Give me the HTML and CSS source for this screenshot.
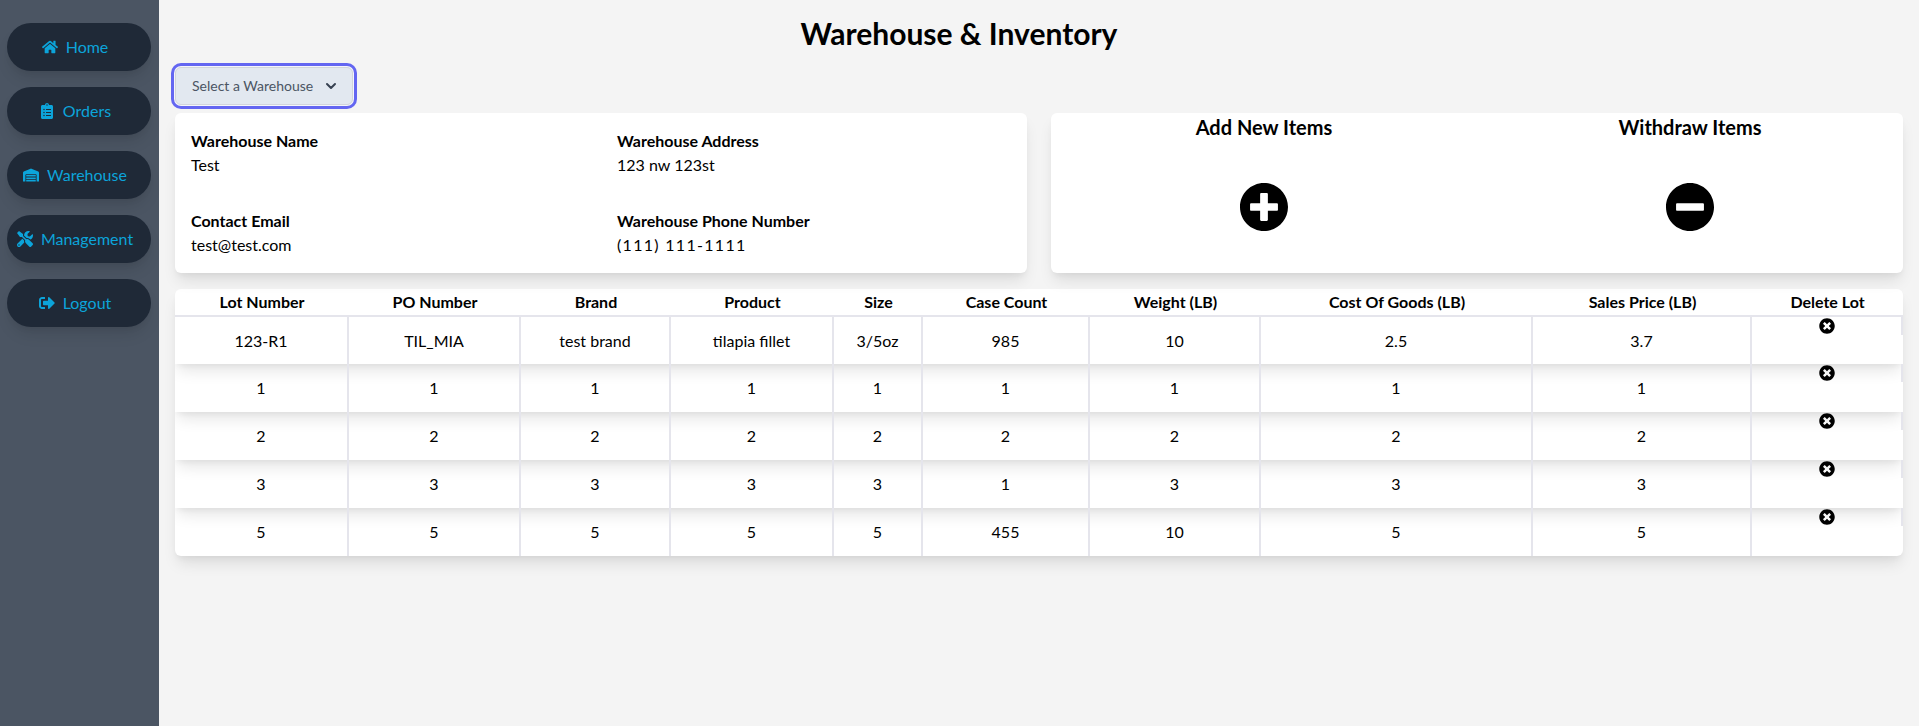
FILE: index.html
```html
<!DOCTYPE html>
<html lang="en">
<head>
<meta charset="utf-8">
<title>Warehouse &amp; Inventory</title>
<link rel="stylesheet" href="styles.css">
</head>
<body>
<div class="app">
  <nav class="sidebar">
    <a class="nav-btn"><svg class="nav-icon" viewBox="0 0 576 512"><path d="M280.37 148.26L96 300.11V464a16 16 0 0 0 16 16l112.06-.29a16 16 0 0 0 15.92-16V368a16 16 0 0 1 16-16h64a16 16 0 0 1 16 16v95.64a16 16 0 0 0 16 16.05L464 480a16 16 0 0 0 16-16V300L295.67 148.26a12.19 12.19 0 0 0-15.3 0zM571.6 251.47L488 182.56V44.05a12 12 0 0 0-12-12h-56a12 12 0 0 0-12 12v72.61L318.47 43a48 48 0 0 0-61 0L4.34 251.47a12 12 0 0 0-1.6 16.9l25.5 31A12 12 0 0 0 45.15 301l235.22-193.74a12.19 12.19 0 0 1 15.3 0L530.9 301a12 12 0 0 0 16.9-1.6l25.5-31a12 12 0 0 0-1.7-16.93z"/></svg><span>Home</span></a>
    <a class="nav-btn"><svg class="nav-icon nav-icon-narrow" viewBox="0 0 384 512"><path d="M336 64h-80c0-35.3-28.7-64-64-64s-64 28.7-64 64H48C21.5 64 0 85.5 0 112v352c0 26.5 21.5 48 48 48h288c26.5 0 48-21.5 48-48V112c0-26.5-21.5-48-48-48zM96 424c-13.3 0-24-10.7-24-24s10.7-24 24-24 24 10.7 24 24-10.7 24-24 24zm0-96c-13.3 0-24-10.7-24-24s10.7-24 24-24 24 10.7 24 24-10.7 24-24 24zm0-96c-13.3 0-24-10.7-24-24s10.7-24 24-24 24 10.7 24 24-10.7 24-24 24zm96-192c13.3 0 24 10.7 24 24s-10.7 24-24 24-24-10.7-24-24 10.7-24 24-24zm128 368c0 4.4-3.6 8-8 8H168c-4.4 0-8-3.6-8-8v-16c0-4.4 3.6-8 8-8h144c4.4 0 8 3.6 8 8v16zm0-96c0 4.4-3.6 8-8 8H168c-4.4 0-8-3.6-8-8v-16c0-4.4 3.6-8 8-8h144c4.4 0 8 3.6 8 8v16zm0-96c0 4.4-3.6 8-8 8H168c-4.4 0-8-3.6-8-8v-16c0-4.4 3.6-8 8-8h144c4.4 0 8 3.6 8 8v16z"/></svg><span>Orders</span></a>
    <a class="nav-btn"><svg class="nav-icon" viewBox="0 0 640 512"><path d="M504 352H136.4c-4.4 0-8 3.6-8 8l-.1 48c0 4.4 3.6 8 8 8H504c4.4 0 8-3.6 8-8v-48c0-4.4-3.6-8-8-8zm0 96H136.1c-4.4 0-8 3.6-8 8l-.1 48c0 4.4 3.6 8 8 8h368c4.4 0 8-3.6 8-8v-48c0-4.4-3.6-8-8-8zm0-192H136.6c-4.4 0-8 3.6-8 8l-.1 48c0 4.4 3.6 8 8 8H504c4.4 0 8-3.6 8-8v-48c0-4.4-3.6-8-8-8zm106.5-139L338.4 3.7a48.15 48.15 0 0 0-36.9 0L29.5 117C11.7 124.5 0 141.9 0 161.3V504c0 4.4 3.6 8 8 8h80c4.4 0 8-3.6 8-8V256c0-17.6 14.6-32 32.6-32h382.8c18 0 32.6 14.4 32.6 32v248c0 4.4 3.6 8 8 8h80c4.4 0 8-3.6 8-8V161.3c0-19.4-11.7-36.8-29.5-44.3z"/></svg><span>Warehouse</span></a>
    <a class="nav-btn"><svg class="nav-icon" viewBox="0 0 512 512"><path d="M501.1 395.7L384 278.6c-23.1-23.1-57.6-27.6-85.4-13.9L192 158.1V96L64 0 0 64l96 128h62.1l106.6 106.6c-13.6 27.8-9.2 62.3 13.9 85.4l117.1 117.1c14.6 14.6 38.2 14.6 52.7 0l52.7-52.7c14.5-14.6 14.5-38.2 0-52.7zM331.7 225c28.3 0 54.9 11 74.9 31l19.4 19.4c15.8-6.9 30.8-16.5 43.8-29.5 37.1-37.1 49.7-89.3 37.9-136.7-2.2-9-13.5-12.1-20.1-5.5l-74.4 74.4-67.9-11.3L334 98.9l74.4-74.4c6.6-6.6 3.4-17.9-5.7-20.2-47.4-11.7-99.6.9-136.6 37.9-28.5 28.5-41.9 66.1-41.2 103.6l82.1 82.1c8.1-1.9 16.5-2.9 24.7-2.9zm-103.9 82l-56.7-56.7L18.7 402.8c-25 25-25 65.5 0 90.5s65.5 25 90.5 0l123.6-123.6c-7.6-19.9-9.9-41.6-5-62.7zM64 472c-13.2 0-24-10.8-24-24 0-13.3 10.7-24 24-24s24 10.7 24 24c0 13.2-10.7 24-24 24z"/></svg><span>Management</span></a>
    <a class="nav-btn"><svg class="nav-icon" viewBox="0 0 512 512"><path d="M497 273L329 441c-15 15-41 4.5-41-17v-96H152c-13.3 0-24-10.7-24-24v-96c0-13.3 10.7-24 24-24h136V88c0-21.4 25.9-32 41-17l168 168c9.3 9.4 9.3 24.6 0 34zM192 436v-40c0-6.6-5.4-12-12-12H96c-17.7 0-32-14.3-32-32V160c0-17.7 14.3-32 32-32h84c6.6 0 12-5.4 12-12V76c0-6.6-5.4-12-12-12H96c-53 0-96 43-96 96v192c0 53 43 96 96 96h84c6.6 0 12-5.4 12-12z"/></svg><span>Logout</span></a>
  </nav>
  <main class="main">
    <h1 class="title">Warehouse &amp; Inventory</h1>
    <button class="select">Select a Warehouse<svg class="chevron" viewBox="0 0 24 24"><path d="M6 9l6 6 6-6"/></svg></button>
    <section class="cards">
      <div class="card info-grid">
        <div><div class="label">Warehouse Name</div><div>Test</div></div>
        <div><div class="label">Warehouse Address</div><div>123 nw 123st</div></div>
        <div><div class="label">Contact Email</div><div>test@test.com</div></div>
        <div><div class="label">Warehouse Phone Number</div><div class="phone">(111) 111-1111</div></div>
      </div>
      <div class="card actions">
        <div class="action">
          <h2 class="action-title">Add New Items</h2>
          <svg class="action-icon" viewBox="8 8 496 496"><path d="M256 8C119 8 8 119 8 256s111 248 248 248 248-111 248-248S393 8 256 8zm144 276c0 6.6-5.4 12-12 12h-92v92c0 6.6-5.4 12-12 12h-56c-6.6 0-12-5.4-12-12v-92h-92c-6.6 0-12-5.4-12-12v-56c0-6.6 5.4-12 12-12h92v-92c0-6.6 5.4-12 12-12h56c6.6 0 12 5.4 12 12v92h92c6.6 0 12 5.4 12 12v56z"/></svg>
        </div>
        <div class="action">
          <h2 class="action-title">Withdraw Items</h2>
          <svg class="action-icon" viewBox="8 8 496 496"><path d="M256 8C119 8 8 119 8 256s111 248 248 248 248-111 248-248S393 8 256 8zM124 296c-6.6 0-12-5.4-12-12v-56c0-6.6 5.4-12 12-12h264c6.6 0 12 5.4 12 12v56c0 6.6-5.4 12-12 12H124z"/></svg>
        </div>
      </div>
    </section>
    <div class="table-card">
      <table class="lots">
        <thead>
          <tr><th>Lot Number</th><th>PO Number</th><th>Brand</th><th>Product</th><th>Size</th><th>Case Count</th><th>Weight (LB)</th><th>Cost Of Goods (LB)</th><th>Sales Price (LB)</th><th>Delete Lot</th></tr>
        </thead>
        <tbody>
          <tr><td>123-R1</td><td>TIL_MIA</td><td>test brand</td><td>tilapia fillet</td><td>3/5oz</td><td>985</td><td>10</td><td>2.5</td><td>3.7</td><td class="del"><svg class="del-icon" viewBox="0 0 512 512"><path d="M256 8C119 8 8 119 8 256s111 248 248 248 248-111 248-248S393 8 256 8zm121.6 313.1c4.7 4.7 4.7 12.3 0 17L338 377.6c-4.7 4.7-12.3 4.7-17 0L256 312l-65.1 65.6c-4.7 4.7-12.3 4.7-17 0L134.4 338c-4.7-4.7-4.7-12.3 0-17l65.6-65-65.6-65.1c-4.7-4.7-4.7-12.3 0-17l39.6-39.6c4.7-4.7 12.3-4.7 17 0l65 65.7 65.1-65.6c4.7-4.7 12.3-4.7 17 0l39.6 39.6c4.7 4.7 4.7 12.3 0 17L312 256l65.6 65.1z"/></svg></td></tr>
          <tr><td>1</td><td>1</td><td>1</td><td>1</td><td>1</td><td>1</td><td>1</td><td>1</td><td>1</td><td class="del"><svg class="del-icon" viewBox="0 0 512 512"><path d="M256 8C119 8 8 119 8 256s111 248 248 248 248-111 248-248S393 8 256 8zm121.6 313.1c4.7 4.7 4.7 12.3 0 17L338 377.6c-4.7 4.7-12.3 4.7-17 0L256 312l-65.1 65.6c-4.7 4.7-12.3 4.7-17 0L134.4 338c-4.7-4.7-4.7-12.3 0-17l65.6-65-65.6-65.1c-4.7-4.7-4.7-12.3 0-17l39.6-39.6c4.7-4.7 12.3-4.7 17 0l65 65.7 65.1-65.6c4.7-4.7 12.3-4.7 17 0l39.6 39.6c4.7 4.7 4.7 12.3 0 17L312 256l65.6 65.1z"/></svg></td></tr>
          <tr><td>2</td><td>2</td><td>2</td><td>2</td><td>2</td><td>2</td><td>2</td><td>2</td><td>2</td><td class="del"><svg class="del-icon" viewBox="0 0 512 512"><path d="M256 8C119 8 8 119 8 256s111 248 248 248 248-111 248-248S393 8 256 8zm121.6 313.1c4.7 4.7 4.7 12.3 0 17L338 377.6c-4.7 4.7-12.3 4.7-17 0L256 312l-65.1 65.6c-4.7 4.7-12.3 4.7-17 0L134.4 338c-4.7-4.7-4.7-12.3 0-17l65.6-65-65.6-65.1c-4.7-4.7-4.7-12.3 0-17l39.6-39.6c4.7-4.7 12.3-4.7 17 0l65 65.7 65.1-65.6c4.7-4.7 12.3-4.7 17 0l39.6 39.6c4.7 4.7 4.7 12.3 0 17L312 256l65.6 65.1z"/></svg></td></tr>
          <tr><td>3</td><td>3</td><td>3</td><td>3</td><td>3</td><td>1</td><td>3</td><td>3</td><td>3</td><td class="del"><svg class="del-icon" viewBox="0 0 512 512"><path d="M256 8C119 8 8 119 8 256s111 248 248 248 248-111 248-248S393 8 256 8zm121.6 313.1c4.7 4.7 4.7 12.3 0 17L338 377.6c-4.7 4.7-12.3 4.7-17 0L256 312l-65.1 65.6c-4.7 4.7-12.3 4.7-17 0L134.4 338c-4.7-4.7-4.7-12.3 0-17l65.6-65-65.6-65.1c-4.7-4.7-4.7-12.3 0-17l39.6-39.6c4.7-4.7 12.3-4.7 17 0l65 65.7 65.1-65.6c4.7-4.7 12.3-4.7 17 0l39.6 39.6c4.7 4.7 4.7 12.3 0 17L312 256l65.6 65.1z"/></svg></td></tr>
          <tr><td>5</td><td>5</td><td>5</td><td>5</td><td>5</td><td>455</td><td>10</td><td>5</td><td>5</td><td class="del"><svg class="del-icon" viewBox="0 0 512 512"><path d="M256 8C119 8 8 119 8 256s111 248 248 248 248-111 248-248S393 8 256 8zm121.6 313.1c4.7 4.7 4.7 12.3 0 17L338 377.6c-4.7 4.7-12.3 4.7-17 0L256 312l-65.1 65.6c-4.7 4.7-12.3 4.7-17 0L134.4 338c-4.7-4.7-4.7-12.3 0-17l65.6-65-65.6-65.1c-4.7-4.7-4.7-12.3 0-17l39.6-39.6c4.7-4.7 12.3-4.7 17 0l65 65.7 65.1-65.6c4.7-4.7 12.3-4.7 17 0l39.6 39.6c4.7 4.7 4.7 12.3 0 17L312 256l65.6 65.1z"/></svg></td></tr>
        </tbody>
      </table>
    </div>
  </main>
</div>
</body>
</html>
```
FILE: styles.css
```css
* { box-sizing: border-box; }
html, body { margin: 0; height: 100%; }
body { font-family: Lato, "Liberation Sans", sans-serif; font-size: 16px; line-height: 24px; color: #000; background: #f4f4f4; overflow: hidden; }
.app { display: flex; height: 726px; }
.sidebar { width: 159px; flex: none; background: #4b5563; padding: 23px 8px 0 7px; display: flex; flex-direction: column; gap: 16px; }
.nav-btn { height: 48px; padding-right: 8px; border-radius: 24px; background: #1f2937; color: #0ca4da; display: flex; align-items: center; justify-content: center; gap: 8px; box-shadow: 0 10px 15px -3px rgba(0,0,0,.1), 0 4px 6px -2px rgba(0,0,0,.05); }
.nav-icon { width: 16px; height: 16px; fill: currentColor; flex: none; }
.nav-icon-narrow { width: 12px; margin: 0 2px; }
.main { flex: 1; min-width: 0; padding: 15px 16px 0; }
.title { margin: 0 0 16px; padding-right: 160px; font-size: 30px; line-height: 36px; font-weight: 700; text-align: center; }
.select { display: flex; align-items: center; justify-content: space-between; width: 178px; height: 38px; padding: 0 13px 0 16px; border: 1px solid #d1d5db; border-radius: 6px; background: #e2e8f0; color: #4b5563; font: 14px/20px Lato, sans-serif; box-shadow: 0 0 0 1px #f4f4fb, 0 0 0 4px #6366f1; }
.chevron { width: 16px; height: 16px; fill: none; stroke: #374151; stroke-width: 3; stroke-linecap: round; stroke-linejoin: round; }
.cards { display: grid; grid-template-columns: 852px 852px; gap: 24px; margin-top: 8px; }
.card { height: 160px; background: #fff; border-radius: 6px; box-shadow: 0 10px 15px -3px rgba(0,0,0,.1), 0 4px 6px -2px rgba(0,0,0,.05); }
.info-grid { display: grid; grid-template-columns: 394px 394px; column-gap: 32px; row-gap: 32px; padding: 16px; align-content: start; }
.label { font-weight: 700; }
.phone { letter-spacing: 1.3px; }
.actions { display: grid; grid-template-columns: 1fr 1fr; }
.action { display: flex; flex-direction: column; align-items: center; }
.action-title { margin: 0 0 42px; font-size: 20px; line-height: 28px; font-weight: 700; }
.action-icon { width: 48px; height: 48px; fill: #000; }
.table-card { margin-top: 16px; width: 1728px; background: #fff; border-radius: 6px; overflow: hidden; box-shadow: 0 10px 15px -3px rgba(0,0,0,.1), 0 4px 6px -2px rgba(0,0,0,.05); }
.lots { width: 100%; border-collapse: separate; border-spacing: 0; table-layout: fixed; text-align: center; }
.lots th { height: 28px; padding: 0; font-weight: 700; border-bottom: 2px solid #e5e5ec; }
.lots th:nth-child(1) { width: 174px; }
.lots th:nth-child(2) { width: 172px; }
.lots th:nth-child(3) { width: 150px; }
.lots th:nth-child(4) { width: 163px; }
.lots th:nth-child(5) { width: 89px; }
.lots th:nth-child(6) { width: 167px; }
.lots th:nth-child(7) { width: 171px; }
.lots th:nth-child(8) { width: 272px; }
.lots th:nth-child(9) { width: 219px; }
.lots tbody tr { height: 48px; box-shadow: 0 10px 15px -3px rgba(0,0,0,.1), 0 4px 6px -2px rgba(0,0,0,.05); }
.lots tbody tr:first-child { height: 47px; }
.lots td { padding: 0; border-right: 2px solid #e5e5ec; }
.lots td.del { border-right: 0; padding-right: 1px; vertical-align: top; line-height: 18px; background: linear-gradient(#e5e5ec, #e5e5ec) right top / 2px 18px no-repeat; }
.del-icon { display: block; width: 16px; height: 16px; margin: 1px auto; fill: #000; }
```
